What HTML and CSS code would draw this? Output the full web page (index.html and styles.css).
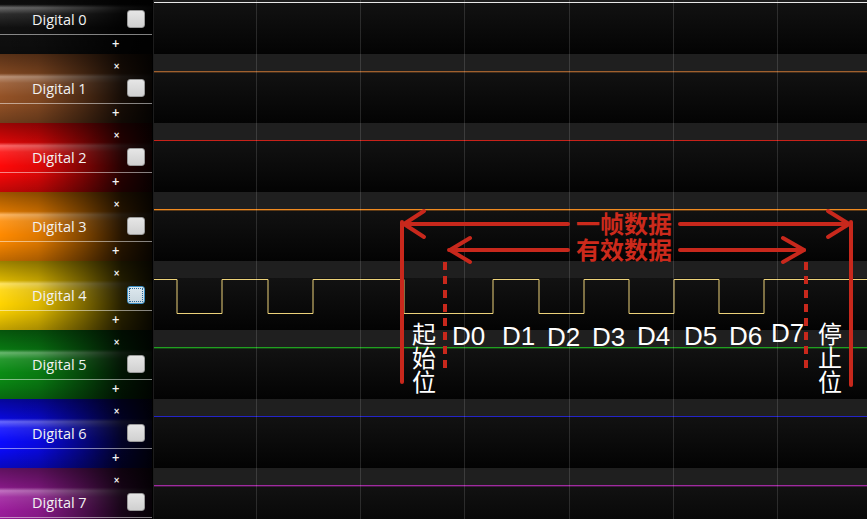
FILE: index.html
```html
<!DOCTYPE html>
<html lang="zh">
<head>
<meta charset="utf-8">
<title>Digital channels</title>
<link rel="stylesheet" href="styles.css">
</head>
<body>
<div class="app">
  <div class="channels">
    <div class="ch c0"><span class="x"></span><div class="lab"><span class="name">Digital 0</span><span class="cb"></span></div><div class="sep"></div><span class="plus">+</span></div>
    <div class="ch c1"><span class="x">×</span><div class="lab"><span class="name">Digital 1</span><span class="cb"></span></div><div class="sep"></div><span class="plus">+</span></div>
    <div class="ch c2"><span class="x">×</span><div class="lab"><span class="name">Digital 2</span><span class="cb"></span></div><div class="sep"></div><span class="plus">+</span></div>
    <div class="ch c3"><span class="x">×</span><div class="lab"><span class="name">Digital 3</span><span class="cb"></span></div><div class="sep"></div><span class="plus">+</span></div>
    <div class="ch c4"><span class="x">×</span><div class="lab"><span class="name">Digital 4</span><span class="cb focus"></span></div><div class="sep"></div><span class="plus">+</span></div>
    <div class="ch c5"><span class="x">×</span><div class="lab"><span class="name">Digital 5</span><span class="cb"></span></div><div class="sep"></div><span class="plus">+</span></div>
    <div class="ch c6"><span class="x">×</span><div class="lab"><span class="name">Digital 6</span><span class="cb"></span></div><div class="sep"></div><span class="plus">+</span></div>
    <div class="ch c7"><span class="x">×</span><div class="lab"><span class="name">Digital 7</span><span class="cb"></span></div><div class="sep"></div><span class="plus"></span></div>
  </div>
  <div class="traces">
    <div class="row"><div class="band"></div><div class="sig s0"></div></div>
    <div class="row"><div class="band"></div><div class="sig s1"></div></div>
    <div class="row"><div class="band"></div><div class="sig s2"></div></div>
    <div class="row"><div class="band"></div><div class="sig s3"></div></div>
    <div class="row">
      <div class="band"></div>
      <svg class="wave" viewBox="0 0 714 69" width="714" height="69">
        <path d="M0 18.5H23V52.5H68V18.5H114V52.5H159V18.5H250V52.5H339V18.5H385V52.5H430V18.5H475V52.5H520V18.5H565V52.5H610V18.5H714" fill="none" stroke="#ecd27a" stroke-width="1"/>
      </svg>
    </div>
    <div class="row"><div class="band"></div><div class="sig s5"></div></div>
    <div class="row"><div class="band"></div><div class="sig s6"></div></div>
    <div class="row"><div class="band"></div><div class="sig s7"></div></div>
    <div class="grid"></div>
  </div>
  <svg class="notes" viewBox="0 0 867 519" width="867" height="519">
    <g stroke="#c8281c" stroke-width="4" fill="none" stroke-linecap="round" stroke-linejoin="round">
      <line x1="402" y1="222" x2="402" y2="382"/>
      <line x1="851" y1="222" x2="851" y2="385"/>
      <line x1="445" y1="262" x2="445" y2="372" stroke-dasharray="8 6" stroke-linecap="butt"/>
      <line x1="806" y1="262" x2="806" y2="372" stroke-dasharray="8 6" stroke-linecap="butt"/>
      <line x1="403" y1="224" x2="568" y2="224"/>
      <line x1="680" y1="224" x2="849" y2="224"/>
      <polyline points="424,211 404,224 424,237"/>
      <polyline points="828,211 849,224 828,237"/>
      <line x1="449" y1="250" x2="568" y2="250"/>
      <line x1="680" y1="250" x2="804" y2="250"/>
      <polyline points="470,238 450,250 470,262"/>
      <polyline points="783,238 804,250 783,262"/>
    </g>
    <g class="red-t">
      <text x="624" y="233">一帧数据</text>
      <text x="624" y="259">有效数据</text>
    </g>
    <g class="cjk-w">
      <text x="412" y="343">起</text>
      <text x="412" y="367">始</text>
      <text x="412" y="391">位</text>
      <text x="818" y="343">停</text>
      <text x="818" y="367">止</text>
      <text x="818" y="391">位</text>
    </g>
    <g class="bits">
      <text x="452" y="345">D0</text>
      <text x="502" y="345">D1</text>
      <text x="547" y="346">D2</text>
      <text x="592" y="346">D3</text>
      <text x="637" y="345">D4</text>
      <text x="684" y="345">D5</text>
      <text x="729" y="345">D6</text>
      <text x="771" y="342">D7</text>
    </g>
  </svg>
</div>
</body>
</html>
```
FILE: styles.css
```css
* { box-sizing: border-box; }
html, body { margin: 0; padding: 0; background: #000; }
body { width: 867px; height: 519px; overflow: hidden; }

.app {
  position: relative;
  display: flex;
  width: 867px;
  height: 519px;
  overflow: hidden;
  font-family: "Open Sans", "Liberation Sans", sans-serif;
}

.channels {
  width: 152px;
  flex: none;
  display: flex;
  flex-direction: column;
  margin-top: -15px;
}

.ch {
  height: 69px;
  flex: none;
  display: flex;
  flex-direction: column;
  color: #fff;
  background-image:
    linear-gradient(90deg, rgba(0,0,0,0) 0%, rgba(0,0,0,0.12) 25%, rgba(0,0,0,0.5) 55%, rgba(0,0,0,0.85) 80%, rgba(0,0,0,0.96) 100%),
    linear-gradient(180deg, rgba(0,0,0,0.4) 0%, rgba(0,0,0,0.15) 28%, rgba(255,255,255,0.38) 33%, rgba(255,255,255,0.12) 42%, rgba(255,255,255,0) 62%, rgba(0,0,0,0.05) 75%, rgba(0,0,0,0.25) 100%);
}
.c0 { background-color: #101010; }
.c1 { background-color: #945226; }
.c2 { background-color: #ff0808; }
.c3 { background-color: #ff8a00; }
.c4 { background-color: #ffd400; }
.c5 { background-color: #0a8c14; }
.c6 { background-color: #0a0aff; }
.c7 { background-color: #9c1c9c; }

.x, .plus {
  display: block;
  text-align: right;
  padding-right: 32px;
  font-family: "DejaVu Sans", sans-serif;
  font-weight: bold;
  line-height: 10px;
  height: 10px;
  color: #f4f4f4;
}
.x { font-size: 8px; margin-top: 8px; }
.plus { font-size: 10px; margin-top: 4px; }

.lab {
  height: 22px;
  margin-top: 5px;
  display: flex;
  align-items: center;
}
.name {
  padding-left: 32px;
  font-size: 14.5px;
  color: #f2f2f2;
}
.cb {
  margin-left: auto;
  margin-right: 7px;
  width: 18px;
  height: 18px;
  border-radius: 3px;
  border: 1px solid #9a9a9a;
  background: linear-gradient(180deg, #e6e6e6, #d0d0d0);
}
.cb.focus {
  border: 1px solid #3d8fc4;
  outline: 1px dotted #2a6a9a;
  outline-offset: -3px;
  background: linear-gradient(180deg, #dde8ee, #c8d6de);
}
.sep {
  height: 1px;
  margin-top: 4px;
  background: rgba(255,255,255,0.5);
}

.traces {
  position: relative;
  flex: 1;
  display: flex;
  flex-direction: column;
  margin-top: -15px;
  margin-left: 1px;
  border-left: 1px solid #1c1c1c;
}
.row {
  position: relative;
  height: 69px;
  flex: none;
  background: linear-gradient(180deg, #171717 0%, #0b0b0b 60%, #030303 100%);
}
.band { height: 17px; background: #1f1f1f; }
.sig { height: 1px; }
.s0 { background: #e8e8e8; }
.s1 { background: #a0602e; box-shadow: 0 1px 0 rgba(160,96,46,0.35); }
.s2 { background: #c8221a; }
.s3 { background: #f08a20; box-shadow: 0 1px 0 rgba(240,138,32,0.35); }
.s5 { background: #20a020; box-shadow: 0 1px 0 rgba(32,160,32,0.35); }
.s6 { background: #2424c8; }
.s7 { background: #a02aa0; box-shadow: 0 1px 0 rgba(160,42,160,0.35); }

.wave {
  position: absolute;
  left: 0;
  top: 0;
  display: block;
}

.grid {
  position: absolute;
  left: 0;
  top: 0;
  width: 100%;
  height: 100%;
  pointer-events: none;
  background-image: repeating-linear-gradient(90deg, transparent 0, transparent 102px, rgba(255,255,255,0.13) 102px, rgba(255,255,255,0.13) 103px, transparent 103px, transparent 104.2px);
}

.notes {
  position: absolute;
  left: 0;
  top: 0;
  pointer-events: none;
}
.red-t text {
  font-family: "Noto Sans CJK SC", sans-serif;
  font-size: 24px;
  font-weight: bold;
  fill: #cc2a1c;
  text-anchor: middle;
}
.cjk-w text {
  font-family: "Noto Sans CJK SC", sans-serif;
  font-size: 24px;
  fill: #ffffff;
}
.bits text {
  font-family: "Liberation Sans", "Noto Sans", sans-serif;
  font-size: 26px;
  fill: #ffffff;
}
```
